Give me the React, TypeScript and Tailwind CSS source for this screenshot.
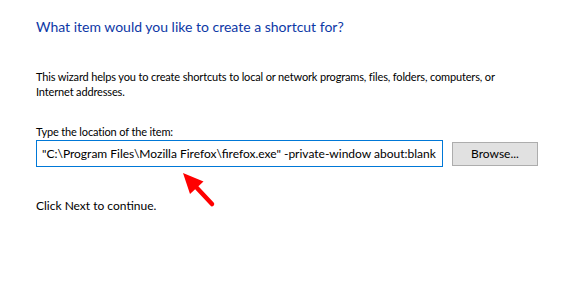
export default function App() {
  return (
    <div className="relative w-[584px] h-[285px] bg-white text-black overflow-hidden font-[Lato,'Open_Sans',sans-serif]">
      <div className="pl-[36px] pr-[20px] pt-[17px]">
        <h1 className="text-[14px] leading-[20px] text-[#0d38a6] font-normal">
          What item would you like to create a shortcut for?
        </h1>

        <p className="mt-[32px] text-[11px] leading-[15px] tracking-[-0.15px]">
          This wizard helps you to create shortcuts to local or network programs, files, folders, computers, or
          <br />
          Internet addresses.
        </p>

        <div className="mt-[25px]">
          <label className="block text-[11px] leading-[15px] tracking-[-0.15px] mb-[1px]">
            Type the location of the item:
          </label>
          <div className="flex items-center gap-[9px]">
            <div className="w-[407px] h-[27px] border border-[#0078d7] flex items-center pl-[5px] text-[12px] whitespace-nowrap overflow-hidden">
              "C:\Program Files\Mozilla Firefox\firefox.exe" -private-window about:blank
            </div>
            <button className="w-[86px] h-[24px] bg-[#e1e1e1] border border-[#adadad] text-[12px]">
              Browse...
            </button>
          </div>
        </div>

        <p className="mt-[31px] text-[12px] leading-[15px]">Click Next to continue.</p>
      </div>

      {/* red pointer arrow */}
      <svg className="absolute left-0 top-0" width="584" height="285" viewBox="0 0 584 285">
        <line x1="197" y1="188" x2="212" y2="204" stroke="#ff0000" strokeWidth="4.5" strokeLinecap="round" />
        <polygon points="183,173 203.5,181.5 190,194" fill="#ff0000" />
      </svg>
    </div>
  );
}
